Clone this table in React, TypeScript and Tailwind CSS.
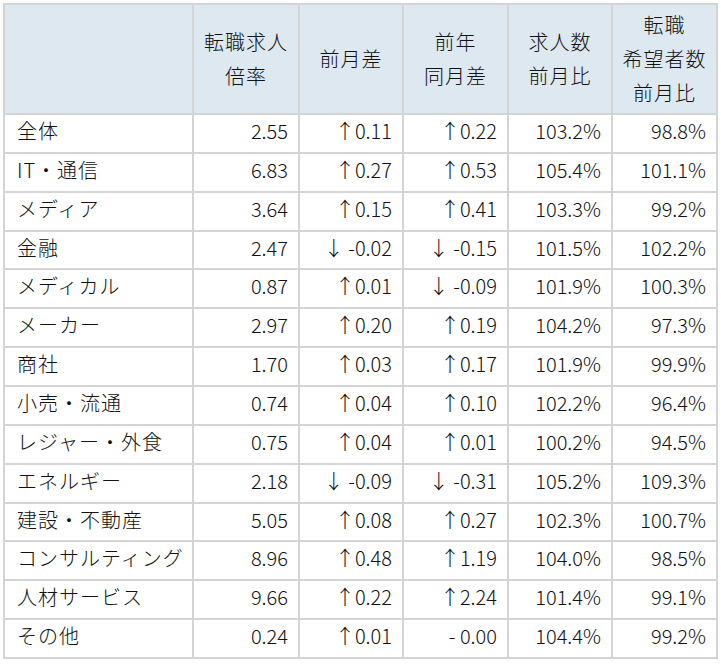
const rows: [string, string, string, string, string, string][] = [
  ['全体', '2.55', '↑0.11', '↑0.22', '103.2%', '98.8%'],
  ['IT・通信', '6.83', '↑0.27', '↑0.53', '105.4%', '101.1%'],
  ['メディア', '3.64', '↑0.15', '↑0.41', '103.3%', '99.2%'],
  ['金融', '2.47', '↓ -0.02', '↓ -0.15', '101.5%', '102.2%'],
  ['メディカル', '0.87', '↑0.01', '↓ -0.09', '101.9%', '100.3%'],
  ['メーカー', '2.97', '↑0.20', '↑0.19', '104.2%', '97.3%'],
  ['商社', '1.70', '↑0.03', '↑0.17', '101.9%', '99.9%'],
  ['小売・流通', '0.74', '↑0.04', '↑0.10', '102.2%', '96.4%'],
  ['レジャー・外食', '0.75', '↑0.04', '↑0.01', '100.2%', '94.5%'],
  ['エネルギー', '2.18', '↓ -0.09', '↓ -0.31', '105.2%', '109.3%'],
  ['建設・不動産', '5.05', '↑0.08', '↑0.27', '102.3%', '100.7%'],
  ['コンサルティング', '8.96', '↑0.48', '↑1.19', '104.0%', '98.5%'],
  ['人材サービス', '9.66', '↑0.22', '↑2.24', '101.4%', '99.1%'],
  ['その他', '0.24', '↑0.01', '- 0.00', '104.4%', '99.2%'],
];

const headers = [
  ['転職求人', '倍率'],
  ['前月差'],
  ['前年', '同月差'],
  ['求人数', '前月比'],
  ['転職', '希望者数', '前月比'],
];

export default function App() {
  return (
    <div className="w-[721px] h-[664px] bg-white pt-[3px] pl-[3px] text-[#111] font-light font-['Noto_Sans_CJK_JP','Noto_Sans',sans-serif]">
      <table className="border-collapse table-fixed w-[713px] text-[20px]">
        <colgroup>
          <col className="w-[189px]" />
          <col className="w-[106px]" />
          <col className="w-[104px]" />
          <col className="w-[105px]" />
          <col className="w-[104px]" />
          <col className="w-[105px]" />
        </colgroup>
        <thead>
          <tr className="h-[110px] bg-[#dde8f0]">
            <th className="border-2 border-[#d4d4d4]" />
            {headers.map((lines, i) => (
              <th key={i} className="border-2 border-[#d4d4d4] font-light text-center leading-[34px] tracking-[1px] align-middle">
                {lines.map((l) => (
                  <div key={l}>{l}</div>
                ))}
              </th>
            ))}
          </tr>
        </thead>
        <tbody>
          {rows.map((r) => (
            <tr key={r[0]} className="h-[38.86px]">
              <td className="border-2 border-[#d4d4d4] pl-[12px] pb-[5px] tracking-[1px] whitespace-nowrap leading-none">{r[0]}</td>
              {r.slice(1).map((v, i) => (
                <td key={i} className="border-2 border-[#d4d4d4] text-right pr-[10px] pb-[5px] whitespace-nowrap leading-none">
                  {v}
                </td>
              ))}
            </tr>
          ))}
        </tbody>
      </table>
    </div>
  );
}
